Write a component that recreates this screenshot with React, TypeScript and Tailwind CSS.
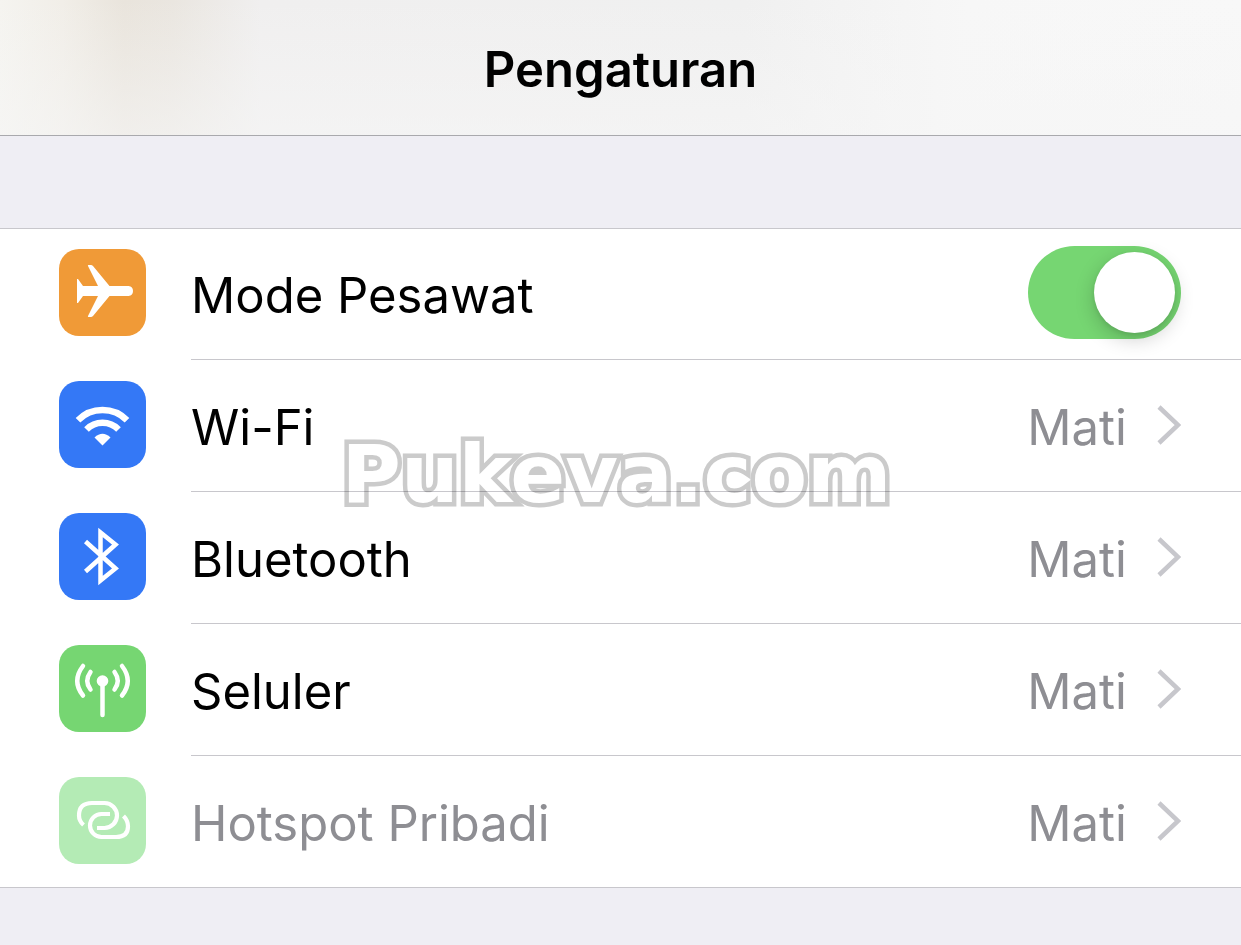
import { useState, type ReactNode } from "react";

type Row = {
  label: string;
  tile: string;
  icon: ReactNode;
  value?: string;
  dimmed?: boolean;
};

const PlaneIcon = () => (
  <path
    fill="#fff"
    d="M18 30 L19 30 L24 37 H39 L29 17 Q28.500 16 29.500 16 H32 Q33 16 34 17 L50.500 37 H69.500 Q74 37.500 74 42 Q74 46.500 69.500 47 H50.500 L34 67 Q33 68 32 68 H29.500 Q28.500 68 29 67 L39 47 H24 L19 54 H18 Z"
  />
);

const WifiIcon = () => (
  <g fill="none" stroke="#fff" strokeWidth="6.500">
    <path d="M19 39.300 A34.500 34.500 0 0 1 68 39.300" />
    <path d="M27.500 48.500 A22.500 22.500 0 0 1 59.500 48.500" />
    <path stroke="none" fill="#fff" d="M35.500 56.500 Q43.500 49 51.500 56.500 L43.500 64.500 Z" />
  </g>
);

const BluetoothIcon = () => (
  <path
    d="M26.500 28.500 L56.500 55.500 L41.500 67.500 V19.500 L56.500 31.500 L26.500 58.500"
    fill="none"
    stroke="#fff"
    strokeWidth="4.500"
  />
);

const AntennaIcon = () => (
  <g fill="none" stroke="#fff" strokeWidth="4.500" strokeLinecap="round">
    <circle cx="43.500" cy="36" r="5.800" fill="#fff" stroke="none" />
    <path d="M43.500 38 V70" />
    <path d="M31.500 27 Q25 36 31.500 44.500 M55.500 27 Q62 36 55.500 44.500" />
    <path d="M24 21 Q12.500 36 24 50.500 M63 21 Q74.500 36 63 50.500" />
  </g>
);

const HotspotIcon = () => (
  <g fill="none" stroke="#fff" strokeWidth="4.200">
    <path d="M24.500 48 Q20 44 20 38.500 Q20 26 33 26 H45.500 A12.500 12.500 0 0 1 45.500 51 H38" />
    <path d="M51 37 H42.500 A11.500 11.500 0 0 0 42.500 60 H57 Q69 60 69 49.500 Q69 43.500 64.500 39" />
  </g>
);

const rows: Row[] = [
  { label: "Mode Pesawat", tile: "bg-[#f09a37]", icon: <PlaneIcon /> },
  { label: "Wi-Fi", tile: "bg-[#3478f6]", icon: <WifiIcon />, value: "Mati" },
  { label: "Bluetooth", tile: "bg-[#3478f6]", icon: <BluetoothIcon />, value: "Mati" },
  { label: "Seluler", tile: "bg-[#76d672]", icon: <AntennaIcon />, value: "Mati" },
  { label: "Hotspot Pribadi", tile: "bg-[#b4ebb5]", icon: <HotspotIcon />, value: "Mati", dimmed: true },
];

function Tile({ row }: { row: Row }) {
  return (
    <span className={`mb-[3px] size-[87px] shrink-0 overflow-hidden rounded-[20px] ${row.tile}`}>
      <svg viewBox="0 0 87 87" className="size-full" aria-hidden="true">
        {row.icon}
      </svg>
    </span>
  );
}

function Toggle({ id }: { id: string }) {
  const [on, setOn] = useState(true);
  return (
    <input
      id={id}
      type="checkbox"
      role="switch"
      checked={on}
      onChange={(e) => setOn(e.target.checked)}
      className="flex h-[93px] w-[153px] shrink-0 cursor-pointer appearance-none items-center rounded-full bg-gray-200 px-[6px] before:block before:size-[81px] before:rounded-full before:bg-white before:shadow-[0_6px_20px_rgba(0,0,0,0.2),0_2px_4px_rgba(0,0,0,0.08)] checked:justify-end checked:bg-[#76d672]"
    />
  );
}

function SettingsRow({ row, last }: { row: Row; last: boolean }) {
  const line = last ? "h-[131px]" : "h-[132px] border-b border-[#c8c7cc]";
  const body = `ml-[45px] flex min-w-0 grow items-center pr-[60px] pb-[2px] ${line}`;
  const label = `grow truncate pt-[6px] ${row.dimmed ? "text-[#8e8e93]" : "text-black"}`;

  if (!row.value) {
    return (
      <li className="flex items-center pl-[59px]">
        <Tile row={row} />
        <div className={body}>
          <label htmlFor="airplane" className={label}>
            {row.label}
          </label>
          <Toggle id="airplane" />
        </div>
      </li>
    );
  }

  return (
    <li>
      <a href="#" className="flex items-center pl-[59px]">
        <Tile row={row} />
        <span className={body}>
          <span className={label}>{row.label}</span>
          <span className="pt-[6px] text-[#8e8e93]">{row.value}</span>
          <svg viewBox="0 0 24 40" className="ml-[30px] h-10 w-6 shrink-0" aria-hidden="true">
            <path d="M2 2 L21 20 L2 38" fill="none" stroke="#c7c7cc" strokeWidth="4.500" />
          </svg>
        </span>
      </a>
    </li>
  );
}

export default function App() {
  return (
    <div className="min-h-screen bg-[#efeef4] font-['Inter','Liberation_Sans',sans-serif]">
      <header className="flex h-[136px] items-center justify-center border-b border-[#a9a9ad] bg-[linear-gradient(to_bottom,transparent,rgba(246,246,246,0.6)),linear-gradient(to_right,#f5f4f0_0%,#f1eee8_5%,#e9e4dc_10%,#eae6e0_14%,#f0efef_21%,#f0f0f0_60%,#f7f7f7_78%,#f8f8f8_100%)]">
        <h1 className="pt-[4px] text-[49px] leading-[60px] font-semibold text-black">Pengaturan</h1>
      </header>
      <main className="pt-[92px]">
        <div className="relative">
          <ul className="border-b border-[#c8c7cc] bg-white text-[49px] leading-[60px] shadow-[inset_0_1px_0_#c8c7cc]">
            {rows.map((row, i) => (
              <SettingsRow key={row.label} row={row} last={i === rows.length - 1} />
            ))}
          </ul>
          <div className="pointer-events-none absolute inset-x-0 top-[196px] pr-2 text-center font-['DejaVu_Sans',sans-serif] text-[81px] leading-[100px] font-bold text-white mix-blend-multiply [-webkit-text-stroke:9px_#cbcbcb] [paint-order:stroke]">
            Pukeva.com
          </div>
        </div>
      </main>
    </div>
  );
}
